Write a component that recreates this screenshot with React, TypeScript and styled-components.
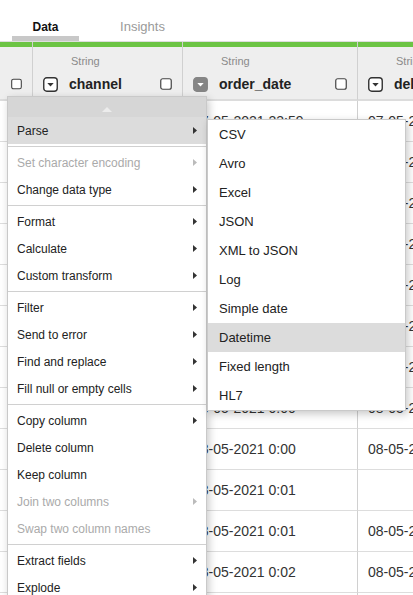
import styled, { createGlobalStyle } from 'styled-components'

const GlobalStyle = createGlobalStyle`
  html, body {
    margin: 0;
    padding: 0;
  }
  body {
    background: #fff;
    font-family: 'Liberation Sans', Arial, sans-serif;
    color: #222;
    overflow: hidden;
  }
`

const Page = styled.div`
  position: relative;
  width: 413px;
  height: 595px;
  overflow: hidden;
`

const TabBar = styled.div`
  display: flex;
  gap: 30px;
  padding-left: 12px;
  height: 41px;
  border-bottom: 1px solid #dedede;
`

const Tab = styled.div<{ $active?: boolean }>`
  box-sizing: border-box;
  width: 67px;
  height: 41px;
  padding-top: 17px;
  display: flex;
  align-items: center;
  justify-content: center;
  font-size: ${p => (p.$active ? '12px' : '13px')};
  font-weight: ${p => (p.$active ? 700 : 400)};
  color: ${p => (p.$active ? '#111' : '#9a9a9a')};
  border-bottom: 5px solid ${p => (p.$active ? '#c8c8c8' : 'transparent')};
`

const Table = styled.div`
  display: grid;
  grid-template-columns: 32px 150px 175px 220px;
`

const HeadCell = styled.div<{ $first?: boolean }>`
  box-sizing: border-box;
  height: 59px;
  display: flex;
  flex-direction: column;
  background: #eeeeee;
  border-left: ${p => (p.$first ? 'none' : '1px solid #d0d0d0')};
  border-bottom: 2px solid #dcdcdc;
  overflow: hidden;
`

const GreenBar = styled.div`
  height: 5px;
  background: #6cc444;
  flex-shrink: 0;
`

const TypeLabel = styled.div`
  margin-top: 8px;
  padding-left: 38px;
  height: 13px;
  line-height: 13px;
  font-size: 11px;
  color: #8a8a8a;
  white-space: nowrap;
`

const NameRow = styled.div<{ $first?: boolean }>`
  margin-top: ${p => (p.$first ? '29px' : '8px')};
  height: 16px;
  display: flex;
  align-items: center;
  padding-left: ${p => (p.$first ? '11px' : '10px')};
  padding-right: 10px;
`

const ColName = styled.div`
  flex: 1;
  margin-left: 11px;
  font-size: 14px;
  font-weight: 700;
  color: #222;
  white-space: nowrap;
`

const Cell = styled.div<{ $first?: boolean }>`
  box-sizing: border-box;
  height: 41px;
  display: flex;
  align-items: center;
  padding-left: 10px;
  border-bottom: 1px solid #dddddd;
  border-left: ${p => (p.$first ? 'none' : '1px solid #d0d0d0')};
  font-size: 14px;
  color: #333;
  white-space: nowrap;
  overflow: hidden;
`

const MainMenu = styled.div`
  position: absolute;
  left: 7px;
  top: 96px;
  width: 200px;
  box-sizing: border-box;
  border: 1px solid #c9c9c9;
  background: #fff;
  box-shadow: 2px 3px 8px rgba(0, 0, 0, 0.22);
  font-size: 12px;
  z-index: 2;
`

const ScrollUp = styled.div`
  height: 20px;
  padding-top: 4px;
  box-sizing: border-box;
  background: #d6d6d6;
  display: flex;
  align-items: center;
  justify-content: center;
`

const MenuItem = styled.div<{ $disabled?: boolean; $active?: boolean }>`
  height: 27px;
  display: flex;
  align-items: center;
  justify-content: space-between;
  padding: 0 9px;
  color: ${p => (p.$disabled ? '#aaaaaa' : '#222')};
  background: ${p => (p.$active ? '#dcdcdc' : 'transparent')};
  white-space: nowrap;
`

const Separator = styled.div`
  height: 1px;
  margin: 2px 0;
  background: #d0d0d0;
`

const SubMenu = styled.div`
  position: absolute;
  left: 207px;
  top: 119px;
  width: 199px;
  box-sizing: border-box;
  border: 1px solid #c9c9c9;
  background: #fff;
  box-shadow: 2px 3px 8px rgba(0, 0, 0, 0.22);
  font-size: 13px;
  z-index: 3;
`

const SubItem = styled.div<{ $active?: boolean }>`
  height: 29px;
  display: flex;
  align-items: center;
  padding-left: 11px;
  color: #222;
  background: ${p => (p.$active ? '#dcdcdc' : 'transparent')};
`

const Checkbox = () => (
  <svg width="12" height="12" viewBox="0 0 12 12">
    <rect x="0.75" y="0.75" width="10.5" height="10.5" rx="2" fill="#fff" stroke="#444" strokeWidth="1.2" />
  </svg>
)

const DropIcon = ({ active }: { active?: boolean }) => (
  <svg width="15" height="15" viewBox="0 0 15 15">
    <rect
      x="0.75"
      y="0.75"
      width="13.5"
      height="13.5"
      rx="3"
      fill={active ? '#858585' : '#fff'}
      stroke={active ? '#858585' : '#333'}
      strokeWidth="1.4"
    />
    <polygon points="4.3,6 10.7,6 7.5,9.6" fill={active ? '#fff' : '#333'} />
  </svg>
)

const Arrow = ({ disabled }: { disabled?: boolean }) => (
  <svg width="4" height="7" viewBox="0 0 4 7">
    <polygon points="0,0 4,3.5 0,7" fill={disabled ? '#bbbbbb' : '#333'} />
  </svg>
)

type Entry = { label: string; arrow?: boolean; disabled?: boolean; active?: boolean } | 'sep'

const menuEntries: Entry[] = [
  { label: 'Parse', arrow: true, active: true },
  'sep',
  { label: 'Set character encoding', arrow: true, disabled: true },
  { label: 'Change data type', arrow: true },
  'sep',
  { label: 'Format', arrow: true },
  { label: 'Calculate', arrow: true },
  { label: 'Custom transform', arrow: true },
  'sep',
  { label: 'Filter', arrow: true },
  { label: 'Send to error', arrow: true },
  { label: 'Find and replace', arrow: true },
  { label: 'Fill null or empty cells', arrow: true },
  'sep',
  { label: 'Copy column', arrow: true },
  { label: 'Delete column' },
  { label: 'Keep column' },
  { label: 'Join two columns', arrow: true, disabled: true },
  { label: 'Swap two column names', disabled: true },
  'sep',
  { label: 'Extract fields', arrow: true },
  { label: 'Explode', arrow: true },
]

const parseEntries = ['CSV', 'Avro', 'Excel', 'JSON', 'XML to JSON', 'Log', 'Simple date', 'Datetime', 'Fixed length', 'HL7']

const columns = [
  { name: 'channel', active: false },
  { name: 'order_date', active: true },
  { name: 'delivery_date', active: false },
]

const rows: [string, string, string][] = [
  ['web', '07-05-2021 23:59', '07-05-2021 23:59'],
  ['web', '07-05-2021 23:59', '07-05-2021 23:59'],
  ['store', '07-05-2021 23:59', '07-05-2021 23:59'],
  ['web', '07-05-2021 23:59', '07-05-2021 23:59'],
  ['web', '07-05-2021 23:59', '07-05-2021 23:59'],
  ['store', '08-05-2021 0:00', '08-05-2021 0:00'],
  ['web', '08-05-2021 0:00', '08-05-2021 0:00'],
  ['web', '08-05-2021 0:00', '08-05-2021 0:00'],
  ['web', '08-05-2021 0:00', '08-05-2021 0:00'],
  ['store', '08-05-2021 0:01', ''],
  ['web', '08-05-2021 0:01', '08-05-2021 0:01'],
  ['web', '08-05-2021 0:02', '08-05-2021 0:02'],
  ['web', '08-05-2021 0:02', '08-05-2021 0:02'],
]

export default function App() {
  return (
    <Page>
      <GlobalStyle />
      <TabBar>
        <Tab $active>Data</Tab>
        <Tab>Insights</Tab>
      </TabBar>

      <Table>
        <HeadCell $first>
          <GreenBar />
          <NameRow $first>
            <Checkbox />
          </NameRow>
        </HeadCell>
        {columns.map(col => (
          <HeadCell key={col.name}>
            <GreenBar />
            <TypeLabel>String</TypeLabel>
            <NameRow>
              <DropIcon active={col.active} />
              <ColName>{col.name}</ColName>
              <Checkbox />
            </NameRow>
          </HeadCell>
        ))}
        {rows.map((r, i) => [
          <Cell key={`c${i}`} $first />,
          <Cell key={`a${i}`}>{r[0]}</Cell>,
          <Cell key={`b${i}`}>{r[1]}</Cell>,
          <Cell key={`d${i}`}>{r[2]}</Cell>,
        ])}
      </Table>

      <MainMenu>
        <ScrollUp>
          <svg width="10" height="5" viewBox="0 0 10 5">
            <polygon points="0,5 5,0 10,5" fill="#ececec" />
          </svg>
        </ScrollUp>
        {menuEntries.map((e, i) =>
          e === 'sep' ? (
            <Separator key={i} />
          ) : (
            <MenuItem key={i} $disabled={e.disabled} $active={e.active}>
              {e.label}
              {e.arrow && <Arrow disabled={e.disabled} />}
            </MenuItem>
          )
        )}
      </MainMenu>

      <SubMenu>
        {parseEntries.map(p => (
          <SubItem key={p} $active={p === 'Datetime'}>
            {p}
          </SubItem>
        ))}
      </SubMenu>
    </Page>
  )
}
